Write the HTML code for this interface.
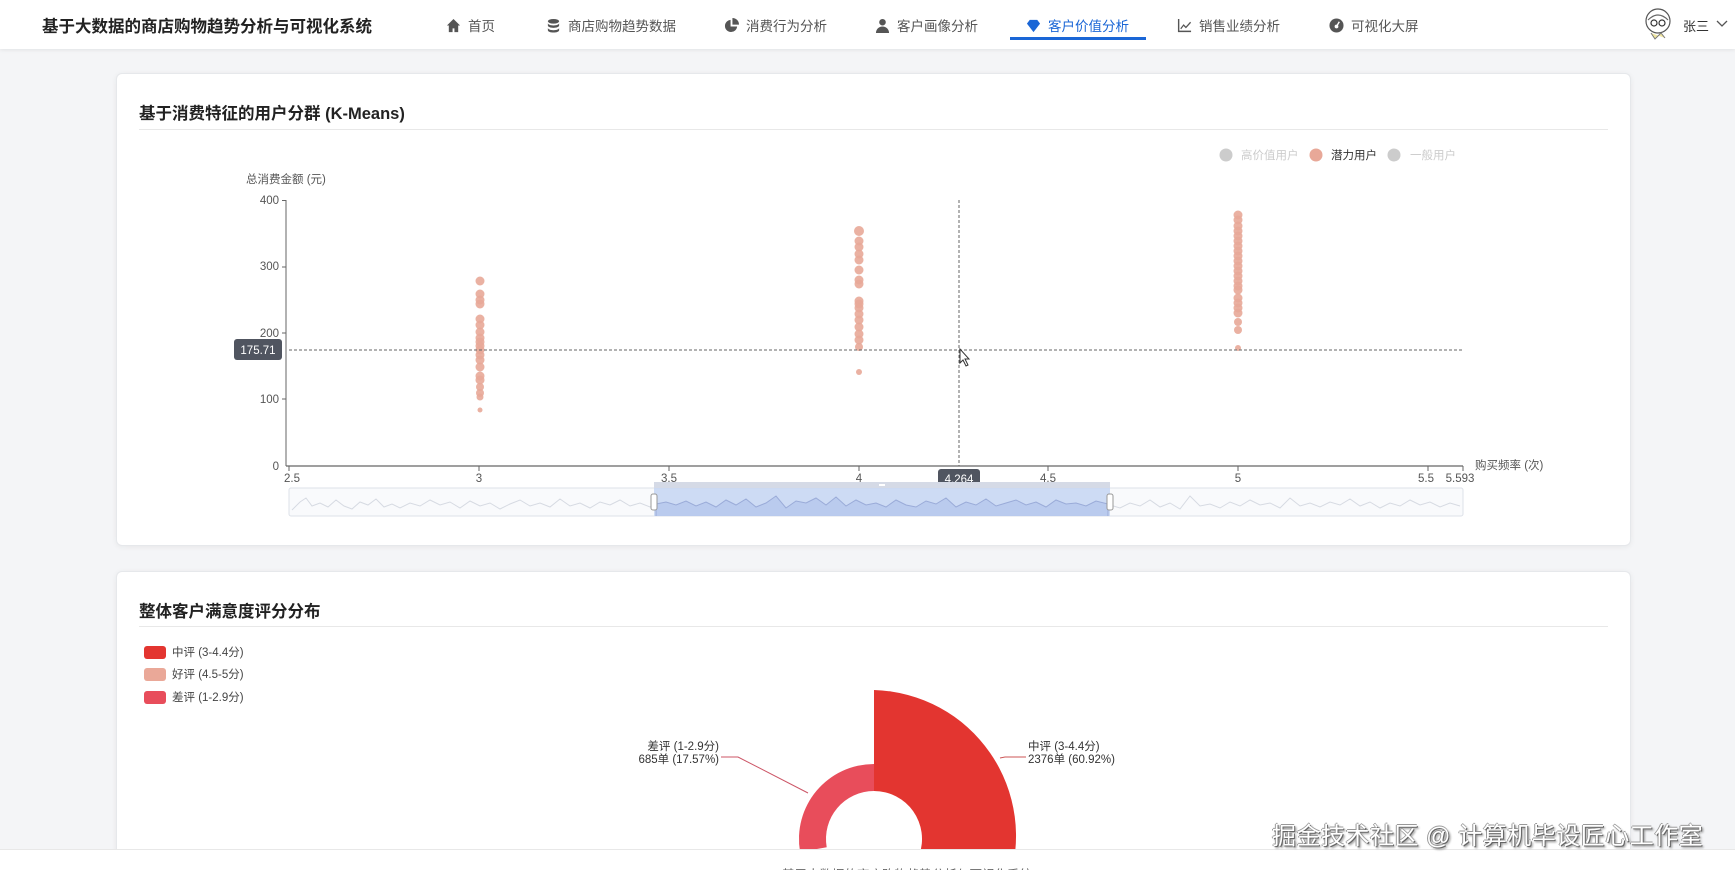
<!DOCTYPE html>
<html><head><meta charset="utf-8"><style>
*{margin:0;padding:0;box-sizing:border-box}
html{width:1735px;height:870px;overflow:hidden}
body{width:1735px;height:870px;overflow:hidden;background:#f4f5f7;font-family:"Liberation Sans","Noto Sans CJK SC",sans-serif;position:relative;color:#333}
.nav{position:absolute;left:0;top:0;width:1735px;height:49px;background:#fff;box-shadow:0 1px 4px rgba(0,0,0,.08)}
.nav .t{position:absolute;left:42px;top:13px;font-size:16.5px;font-weight:bold;color:#222}
.ni{position:absolute;top:15px;font-size:13.5px;color:#555;display:flex;align-items:center;gap:7px;white-space:nowrap}
.ni svg{width:15px;height:15px;fill:#555}
.ni.a{color:#1a66d6}.ni.a svg{fill:#1a66d6}
.ul{position:absolute;left:1010px;top:37px;width:136px;height:3px;background:#1a66d6}
.card{position:absolute;background:#fff;border:1px solid #e6e8eb;border-radius:6px;box-shadow:0 1px 6px rgba(0,0,0,.06)}
.ct{position:absolute;left:22px;font-size:16.5px;font-weight:bold;color:#222}
.dv{position:absolute;left:22px;right:22px;height:1px;background:#e8e8e8}
.footer{position:absolute;left:0;top:849px;width:1735px;height:21px;background:#fff;border-top:1px solid #e8e8e8;overflow:hidden}
.footer span{position:absolute;left:738px;top:14px;font-size:12.5px;color:#666;white-space:nowrap}
.wm{position:absolute;left:1272px;top:816px;font-size:24px;color:#fff;text-shadow:1px 1px 0 #666,-1px 0 0 #999,0 -1px 0 #999,2px 2px 2px #888;letter-spacing:.5px;white-space:nowrap}
</style></head><body>
<div class="nav">
<div class="t">基于大数据的商店购物趋势分析与可视化系统</div>
<div class="ni" style="left:446px"><svg viewBox="0 0 16 16"><path d="M8 1 1 8h2v7h4v-4h2v4h4V8h2z"/></svg>首页</div>
<div class="ni" style="left:546px"><svg viewBox="0 0 16 16"><ellipse cx="8" cy="3.5" rx="6" ry="2.5"/><path d="M2 5.5c0 1.4 2.7 2.5 6 2.5s6-1.1 6-2.5V8c0 1.4-2.7 2.5-6 2.5S2 9.4 2 8zM2 10.5c0 1.4 2.7 2.5 6 2.5s6-1.1 6-2.5V13c0 1.4-2.7 2.5-6 2.5S2 14.4 2 13z"/></svg>商店购物趋势数据</div>
<div class="ni" style="left:724px"><svg viewBox="0 0 16 16"><path d="M7 2a6.5 6.5 0 1 0 7 7H7z"/><path d="M9 0v7h7a7 7 0 0 0-7-7z"/></svg>消费行为分析</div>
<div class="ni" style="left:875px"><svg viewBox="0 0 16 16"><circle cx="8" cy="4.5" r="3.5"/><path d="M1 16c0-4 3-7 7-7s7 3 7 7z"/></svg>客户画像分析</div>
<div class="ni a" style="left:1026px"><svg viewBox="0 0 16 16"><path d="M4 2h8l3 4-7 9-7-9z"/></svg>客户价值分析</div>
<div class="ul"></div>
<div class="ni" style="left:1177px"><svg viewBox="0 0 16 16"><path d="M1 1h1.5v12.5H15V15H1z"/><path d="M3.5 11 7 6.5l2.5 2.5L14 4l1 1-5.5 6L7 8.5 4.5 12z"/></svg>销售业绩分析</div>
<div class="ni" style="left:1329px"><svg viewBox="0 0 16 16"><circle cx="8" cy="8" r="7.5"/><circle cx="8" cy="9" r="2" fill="#fff"/><path d="M8 9l3-5" stroke="#fff" stroke-width="1.5"/></svg>可视化大屏</div>
<svg style="position:absolute;left:1643px;top:7px" width="30" height="34" viewBox="0 0 30 34"><ellipse cx="15" cy="14" rx="12" ry="12" fill="#fff" stroke="#555" stroke-width="1.2"/><path d="M5 13q10-10 20 0" fill="none" stroke="#666" stroke-width="1.2"/><circle cx="11" cy="16" r="3" fill="none" stroke="#333" stroke-width="1.2"/><circle cx="19" cy="16" r="3" fill="none" stroke="#333" stroke-width="1.2"/><path d="M8 26l4 6 6-6 4 5" fill="#f0e6a0" stroke="#777"/></svg>
<div style="position:absolute;left:1683px;top:16px;font-size:13px;color:#333">张三</div>
<svg style="position:absolute;left:1716px;top:20px" width="12" height="8" viewBox="0 0 12 8"><path d="M1 1l5 5 5-5" fill="none" stroke="#555" stroke-width="1.3"/></svg>
</div>

<div class="card" style="left:116px;top:73px;width:1515px;height:473px">
<div class="ct" style="top:26px">基于消费特征的用户分群 (K-Means)</div>
<div class="dv" style="top:55px"></div>
</div>

<div class="card" style="left:116px;top:571px;width:1515px;height:299px;border-bottom:none;border-radius:6px 6px 0 0">
<div class="ct" style="top:26px">整体客户满意度评分分布</div>
<div class="dv" style="top:54px"></div>
</div>

<svg style="position:absolute;left:0;top:0" width="1735" height="870" font-family="Liberation Sans, Noto Sans CJK SC, sans-serif">
<circle cx="1226" cy="155" r="6.5" fill="#ccc"/><text x="1241" y="159" font-size="11.5" fill="#ccc">高价值用户</text>
<circle cx="1316" cy="155" r="6.5" fill="#e8a898"/><text x="1331" y="159" font-size="11.5" fill="#333">潜力用户</text>
<circle cx="1394" cy="155" r="6.5" fill="#ccc"/><text x="1410" y="159" font-size="11.5" fill="#ccc">一般用户</text>
<text x="246" y="183" font-size="11.5" fill="#555">总消费金额 (元)</text>
<g font-size="11.5" fill="#555" text-anchor="end">
<text x="279" y="204">400</text><text x="279" y="270">300</text><text x="279" y="337">200</text><text x="279" y="403">100</text><text x="279" y="470">0</text></g>
<g stroke="#666" stroke-width="1"><line x1="286" y1="200" x2="286" y2="466"/><line x1="282" y1="200.5" x2="286" y2="200.5"/><line x1="282" y1="267" x2="286" y2="267"/><line x1="282" y1="333" x2="286" y2="333"/><line x1="282" y1="399" x2="286" y2="399"/>
<line x1="286" y1="466" x2="1463" y2="466" stroke-width="1.3"/>
<line x1="289" y1="466" x2="289" y2="471"/><line x1="479" y1="466" x2="479" y2="471"/><line x1="669" y1="466" x2="669" y2="471"/><line x1="859" y1="466" x2="859" y2="471"/><line x1="1048" y1="466" x2="1048" y2="471"/><line x1="1238" y1="466" x2="1238" y2="471"/><line x1="1428" y1="466" x2="1428" y2="471"/><line x1="1463" y1="466" x2="1463" y2="471"/></g>
<g font-size="11.5" fill="#555" text-anchor="middle">
<text x="292" y="482">2.5</text><text x="479" y="482">3</text><text x="669" y="482">3.5</text><text x="859" y="482">4</text><text x="1048" y="482">4.5</text><text x="1238" y="482">5</text><text x="1426" y="482">5.5</text><text x="1460" y="482">5.593</text></g>
<text x="1475" y="469" font-size="11.5" fill="#555">购买频率 (次)</text>
<g fill="#e8a898" fill-opacity=".9">
<circle cx="480" cy="281" r="4.5"/><circle cx="480" cy="294" r="4.5"/><circle cx="480" cy="300" r="4.5"/><circle cx="480" cy="304" r="4.5"/><circle cx="480" cy="319" r="4.5"/><circle cx="480" cy="325" r="4.5"/><circle cx="480" cy="332" r="4.5"/><circle cx="480" cy="338" r="4.5"/><circle cx="480" cy="342" r="4.5"/><circle cx="480" cy="346" r="4.5"/><circle cx="480" cy="350" r="4.5"/><circle cx="480" cy="355" r="4.5"/><circle cx="480" cy="360" r="4.5"/><circle cx="480" cy="367" r="4.5"/><circle cx="480" cy="376" r="4.5"/><circle cx="480" cy="380" r="4.5"/><circle cx="480" cy="387" r="4"/><circle cx="480" cy="393" r="4"/><circle cx="480" cy="397" r="3.5"/><circle cx="480" cy="410" r="2.5"/>
<circle cx="859" cy="231" r="5"/><circle cx="859" cy="241" r="4.5"/><circle cx="859" cy="247" r="4.5"/><circle cx="859" cy="254" r="4.5"/><circle cx="859" cy="260" r="4.5"/><circle cx="859" cy="270" r="4.5"/><circle cx="859" cy="280" r="4.5"/><circle cx="859" cy="284" r="4.5"/><circle cx="859" cy="301" r="4.5"/><circle cx="859" cy="304" r="4.5"/><circle cx="859" cy="308" r="4.5"/><circle cx="859" cy="314" r="4.5"/><circle cx="859" cy="320" r="4.5"/><circle cx="859" cy="327" r="4.5"/><circle cx="859" cy="334" r="4.5"/><circle cx="859" cy="340" r="4.5"/><circle cx="859" cy="347" r="4"/><circle cx="859" cy="372" r="3"/>
<circle cx="1238" cy="215" r="4.5"/><circle cx="1238" cy="220" r="4.5"/><circle cx="1238" cy="226" r="4.5"/><circle cx="1238" cy="231" r="4.5"/><circle cx="1238" cy="236" r="4.5"/><circle cx="1238" cy="241" r="4.5"/><circle cx="1238" cy="246" r="4.5"/><circle cx="1238" cy="251" r="4.5"/><circle cx="1238" cy="256" r="4.5"/><circle cx="1238" cy="261" r="4.5"/><circle cx="1238" cy="266" r="4.5"/><circle cx="1238" cy="271" r="4.5"/><circle cx="1238" cy="276" r="4.5"/><circle cx="1238" cy="281" r="4.5"/><circle cx="1238" cy="286" r="4.5"/><circle cx="1238" cy="290" r="4.5"/><circle cx="1238" cy="298" r="4.5"/><circle cx="1238" cy="303" r="4.5"/><circle cx="1238" cy="308" r="4.5"/><circle cx="1238" cy="313" r="4.5"/><circle cx="1238" cy="322" r="4"/><circle cx="1238" cy="330" r="4"/><circle cx="1238" cy="348" r="3"/>
</g>
<g stroke="#666" stroke-dasharray="3,2" stroke-width="1"><line x1="959" y1="200" x2="959" y2="466"/><line x1="289" y1="350" x2="1463" y2="350"/></g>
<rect x="234" y="339" width="48" height="21" rx="3" fill="#505560"/><text x="258" y="354" font-size="11.5" fill="#fff" text-anchor="middle">175.71</text>
<rect x="938" y="469" width="42" height="20" rx="3" fill="#505560"/><text x="959" y="483" font-size="11.5" fill="#fff" text-anchor="middle">4.264</text>
<path d="M960 349v14l3-3 3 6 2-1-3-6h4z" fill="#fff" stroke="#333" stroke-width="1"/>
<rect x="289" y="488" width="1174" height="28" rx="2" fill="#f9fafc" stroke="#dde1e8"/>
<polyline fill="none" stroke="#d6dae2" stroke-width="1" points="292,510 300,502 306,498 312,506 320,503 328,507 336,500 344,506 352,509 360,502 368,505 376,499 384,507 392,504 400,508 410,503 420,506 430,500 440,505 450,502 460,508 470,501 480,506 490,503 500,509 510,504 520,500 530,506 540,503 550,507 560,499 570,506 580,503 590,508 600,502 610,505 620,500 630,506 640,503 650,507 654,505"/>
<polyline fill="none" stroke="#d6dae2" stroke-width="1" points="1110,505 1120,508 1130,503 1140,506 1150,500 1160,507 1170,503 1180,509 1190,496 1200,506 1210,504 1220,508 1230,502 1240,506 1250,500 1260,505 1270,503 1280,508 1290,498 1300,506 1310,503 1320,507 1330,502 1340,505 1350,499 1360,506 1370,502 1380,508 1390,503 1400,506 1410,500 1420,505 1430,502 1440,507 1450,503 1460,506"/>
<rect x="654" y="482" width="456" height="6" fill="#d5dae6"/>
<rect x="654" y="488" width="456" height="28" fill="#c6d5f2" fill-opacity=".85"/>
<polyline fill="#aebfea" fill-opacity=".6" stroke="#9aabd8" stroke-width="1" points="656,516 656,504 666,502 676,505 686,501 696,506 706,502 716,507 726,500 736,505 746,499 756,507 766,503 776,496 786,508 796,501 806,503 816,498 826,505 836,497 846,506 856,500 866,505 876,503 886,507 896,500 906,505 916,507 926,501 936,504 946,498 956,507 966,502 976,505 986,499 996,506 1006,503 1016,500 1026,505 1036,502 1046,507 1056,500 1066,504 1076,503 1086,506 1096,501 1108,504 1108,516"/>
<rect x="879" y="484" width="6" height="2" fill="#fff"/>
<rect x="651" y="494" width="6" height="16" rx="2" fill="#fff" stroke="#999"/>
<rect x="1107" y="494" width="6" height="16" rx="2" fill="#fff" stroke="#999"/>
<rect x="144" y="646" width="22" height="13" rx="3" fill="#e33530"/><text x="172" y="656" font-size="11.5" fill="#444">中评 (3-4.4分)</text>
<rect x="144" y="668" width="22" height="13" rx="3" fill="#eaa898"/><text x="172" y="678" font-size="11.5" fill="#444">好评 (4.5-5分)</text>
<rect x="144" y="691" width="22" height="13" rx="3" fill="#e84d5b"/><text x="172" y="701" font-size="11.5" fill="#444">差评 (1-2.9分)</text>
<path d="M874,690 A146,146 0 1 1 782.1,952.5 L843.8,876.3 A48,48 0 1 0 874,791 Z" fill="#e33530"/>
<path d="M800.1,852 A75,75 0 0 1 874,764 L874,791 A48,48 0 0 0 826.7,847.3 Z" fill="#e84d5b"/>
<polyline points="721,757 738,757 808,793" fill="none" stroke="#c56" stroke-width="1"/>
<polyline points="1000,758 1005,757 1026,757" fill="none" stroke="#c55" stroke-width="1"/>
<g font-size="11.5" fill="#333"><text x="719" y="750" text-anchor="end">差评 (1-2.9分)</text><text x="719" y="763" text-anchor="end">685单 (17.57%)</text>
<text x="1028" y="750">中评 (3-4.4分)</text><text x="1028" y="763">2376单 (60.92%)</text></g>
</svg>
<div class="footer"><span>© 2025 基于大数据的商店购物趋势分析与可视化系统</span></div>
<div class="wm">掘金技术社区 @ 计算机毕设匠心工作室</div>
</body></html>
